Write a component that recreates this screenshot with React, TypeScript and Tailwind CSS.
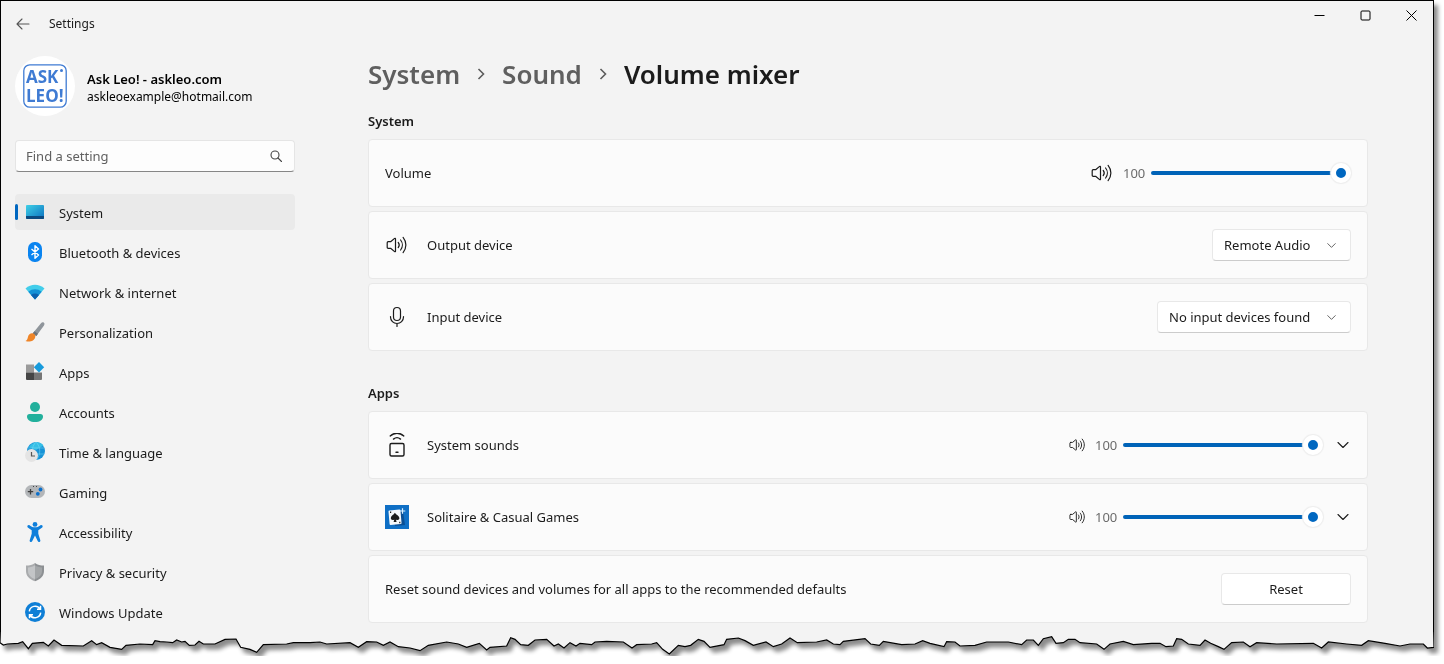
import React, { useState } from "react";

const SpeakerIcon = ({ className }: { className?: string }) => (
  <svg viewBox="0 0 22 18" className={className} fill="none" stroke="currentColor" strokeWidth="1.2" strokeLinecap="round" strokeLinejoin="round">
    <path d="M2.200 5.700h2.400l4-3.300c.4-.3.9-.1.9.4v12.400c0 .5-.5.7-.9.4l-4-3.300H2.200c-.6 0-1-.4-1-1V6.700c0-.6.4-1 1-1z" />
    <path d="M12.200 6.400c1.200 1.500 1.200 3.700 0 5.200" />
    <path d="M14.600 4c2.300 2.900 2.300 7.100 0 10" />
    <path d="M17.100 1.400c3.700 4.500 3.700 10.700 0 15.200" />
  </svg>
);

const MicIcon = () => (
  <svg viewBox="0 0 24 24" className="size-6" fill="none" stroke="currentColor" strokeWidth="1.2" strokeLinecap="round">
    <rect x="8.500" y="2.500" width="7" height="13" rx="3.500" />
    <path d="M5.500 11.500v.5a6.500 6.500 0 0 0 13 0v-.5M12 18.500v3" />
  </svg>
);

const SystemSoundsIcon = () => (
  <svg viewBox="0 0 24 24" className="size-6" fill="none" stroke="currentColor" strokeWidth="1.400" strokeLinecap="round">
    <rect x="5" y="10.500" width="14" height="12.500" rx="1.500" />
    <path d="M11 19.200h2M5.200 2.900c4-3.600 9.600-3.600 13.600 0M8.500 6.100c2-1.700 5-1.700 7 0" />
  </svg>
);

const SolitaireIcon = () => (
  <svg viewBox="0 0 24 24" className="size-6">
    <path fill="#0f6fc5" d="M0 0h24v24H0z" />
    <path fill="#0a4f95" d="m8 7 10-1 2 14-10 1z" />
    <rect x="4" y="5" width="12" height="14.500" rx="1" fill="#f5f8fb" transform="rotate(-5 10 12)" />
    <path fill="#1c1c1c" d="M9.900 7.800c1.200 2 4.300 3.200 4.500 5.300.1 1.800-2.100 2.600-3.500 1.300l.7 2.500H8.600l.7-2.500c-1.400 1.300-3.600.5-3.500-1.300.1-2.100 2.900-3.300 4.100-5.300zM5 6.500h1.200V8H5zM14.200 16.700h1.200v1.500h-1.200z" />
    <path stroke="#d9efff" strokeWidth="1.200" d="M17.500 3.200v5.600M14.700 6h5.600" />
  </svg>
);

const Chevron = ({ className }: { className?: string }) => (
  <svg viewBox="0 0 12 12" className={className} fill="none" stroke="currentColor" strokeWidth="1.100" strokeLinecap="round" strokeLinejoin="round" aria-hidden="true">
    <path d="m1 3.500 5 5 5-5" />
  </svg>
);

const navIcons: Record<string, React.ReactNode> = {
  System: (
    <>
      <defs>
        <linearGradient id="sys" x1="0" y1="0" x2="1" y2="1">
          <stop stopColor="#3fd0e6" />
          <stop offset="1" stopColor="#0a70c0" />
        </linearGradient>
      </defs>
      <rect x="1" y="3" width="18" height="14" rx="1" fill="url(#sys)" />
      <path d="M1 14h18v2a1 1 0 0 1-1 1H2a1 1 0 0 1-1-1z" fill="#0b4a80" />
    </>
  ),
  "Bluetooth & devices": (
    <>
      <rect x="3" y="0" width="14" height="20" rx="6.500" fill="#0a84f0" />
      <path d="m6.500 7 7 6-3.500 3.200V3.800L13.500 7l-7 6" fill="none" stroke="#fff" strokeWidth="1.400" strokeLinejoin="round" />
    </>
  ),
  "Network & internet": (
    <>
      <path d="M.5 6.500c5.500-5 13.500-5 19 0L10 17.500z" fill="#42cdea" />
      <path d="M3.300 9.700c4-3.300 9.400-3.300 13.400 0L10 17.500z" fill="#1391d6" />
      <path d="M6 13c2.500-1.900 5.500-1.900 8 0l-4 4.500z" fill="#0b60ad" />
    </>
  ),
  Personalization: (
    <>
      <path d="M18.700.6c1.100.8 1 1.800.3 2.800L11.300 14l-3.700-2.600L16 1.300c.8-.9 1.700-1.300 2.700-.7z" fill="#8f959b" />
      <path d="m9.500 9.200 3.500 2.500-1.700 2.300-3.700-2.600z" fill="#6e747a" />
      <path d="M7 11.200c2.500.2 3.700 1.800 3.200 4C9.500 18.600 5 20.500.5 19c2-.9 1.900-2.300 2.500-4.300.6-2.100 2-3.500 4-3.500z" fill="#ef8528" />
    </>
  ),
  Apps: (
    <>
      <path d="M1 2.500h8v8H1z" fill="#9a9a9a" />
      <path d="M1 10.500h8v7.500H2a1 1 0 0 1-1-1z" fill="#454545" />
      <path d="M9 10.500h8V17a1 1 0 0 1-1 1H9z" fill="#767676" />
      <path d="m14 0 5.200 5.200-5.200 5.200-5.200-5.200z" fill="#189bdc" />
    </>
  ),
  Accounts: (
    <>
      <circle cx="10" cy="5" r="5" fill="#22b09c" />
      <path d="M4.500 12h11c1.600 0 2.500 1 2.500 2.400C18 17.800 14.800 20 10 20s-8-2.200-8-5.600C2 13 2.900 12 4.500 12z" fill="#22b09c" />
    </>
  ),
  "Time & language": (
    <>
      <circle cx="11" cy="9" r="9" fill="#1793d6" />
      <path d="M4 5c4-6 11-6 14.500-1.500L11 8z" fill="#36bfe6" />
      <path d="M11 0c-5 5-5 13 0 18 5-5 5-13 0-18zM3 6h16M3 12h16" fill="none" stroke="#7ddcf5" strokeWidth=".5" />
      <circle cx="6.500" cy="13.500" r="6.500" fill="#e4e4e4" />
      <path d="M6.500 10v4H10" fill="none" stroke="#555" strokeWidth="1.200" />
    </>
  ),
  Gaming: (
    <>
      <rect x="0" y="3" width="20" height="13" rx="6.500" fill="#b3b6b9" />
      <path d="M5.500 7v5.500M2.800 9.700h5.400" stroke="#3c3c3c" strokeWidth="1.300" />
      <circle cx="15.500" cy="7.500" r="1.900" fill="#0b6fcb" />
      <circle cx="12.800" cy="11.800" r="1.900" fill="#0b6fcb" />
      <path d="M8 4.500h1M11 4.500h1" stroke="#444" />
    </>
  ),
  Accessibility: (
    <>
      <circle cx="10" cy="2.400" r="2.400" fill="#0f7fdb" />
      <path d="M2.600 3.600c.6-.8 1.500-.7 2.200-.2C8 6 12 6 15.200 3.400c.7-.5 1.600-.6 2.200.2.500.8.200 1.600-.5 2.100l-3.600 2.600v3.500l2 6.400c.5 1.600-1.900 2.500-2.600.9L10 13.500l-2.700 5.600c-.7 1.600-3.100.7-2.600-.9l2-6.400V8.300L3.100 5.700c-.7-.5-1-1.300-.5-2.100z" fill="#0f7fdb" />
    </>
  ),
  "Privacy & security": (
    <>
      <path d="M10 1c2.500 2 5.500 2.500 9 2.600V9c0 5-3.500 8.200-9 10.200z" fill="#8d9093" />
      <path d="M10 1C7.500 3 4.500 3.500 1 3.600V9c0 5 3.500 8.200 9 10.200z" fill="#a9abad" />
      <path d="M10 3.200c2 1.500 4.300 2 7 2.200V9c0 3.800-2.500 6.400-7 8.100z" fill="#a3a6a8" />
      <path d="M10 3.200C8 4.700 5.700 5.200 3 5.400V9c0 3.800 2.500 6.400 7 8.100z" fill="#c3c5c7" />
    </>
  ),
  "Windows Update": (
    <>
      <circle cx="10" cy="10" r="10" fill="#0f7fd6" />
      <path d="M4.300 9.300A5.800 5.800 0 0 1 15 7M15.700 10.700A5.800 5.800 0 0 1 5 13M15.500 3.800v3.500H12M4.500 16.200v-3.500H8" fill="none" stroke="#fff" strokeWidth="1.500" />
    </>
  ),
};

const TORN_EDGE =
  "0,68 10,75 22,72 55,70 68,65 85,86 97,70 130,67 145,78 162,60 185,76 250,78 275,62 290,74 305,68 330,82 365,88 378,76 420,72 458,74 465,62 480,65 500,66 518,68 530,60 545,66 555,64 568,76 585,75 597,64 610,72 645,72 675,58 708,57 722,82 750,88 770,97 790,74 860,72 880,68 930,68 960,66 980,72 1050,68 1075,82 1100,65 1130,66 1150,76 1170,66 1195,80 1230,84 1260,92 1285,76 1340,66 1375,72 1400,82 1438,70 " +
  "1460,90 1470,82 1520,78 1532,53 1545,58 1562,74 1585,76 1605,60 1640,58 1662,78 1675,72 1692,84 1710,68 1728,78 1740,70 1775,74 1785,66 1820,64 1870,66 1896,84 1910,74 1955,72 1970,68 1988,88 2008,102 2035,76 2055,80 2072,76 2095,58 2112,64 2130,82 2172,74 2180,58 2215,54 2235,62 2260,76 2298,66 2320,80 2345,72 2370,54 2392,68 2450,66 2480,60 2500,72 2520,74 2530,64 2595,56 2612,72 2638,76 2650,64 2705,74 2745,72 2768,62 2790,70 2832,80 2840,65 2865,66 " +
  "2880,78 2925,76 2960,66 3025,66 3065,74 3080,60 3100,60 3115,76 3130,56 3155,50 3168,70 3190,68 3205,58 3225,58 3240,68 3290,72 3312,88 3330,72 3370,64 3400,74 3455,70 3480,70 3498,80 3520,78 3530,56 3545,58 3565,72 3600,76 3615,60 3632,70 3655,80 3672,88 3695,68 3730,66 3750,80 3770,68 3830,72 3940,70 3965,84 3985,66 4040,72 4085,76 4105,62 4155,70 4200,78 4230,72 4270,72 4282,84 4302,82";

const TornEdge = () => (
  <svg viewBox="0 36 4302 72" preserveAspectRatio="none" className="block h-6 w-full" aria-hidden="true">
    <polygon points={`0,36 ${TORN_EDGE} 4302,36`} fill="#f3f3f3" />
    <polyline points={`1,36 ${TORN_EDGE} 4301,36`} fill="none" stroke="#000" strokeWidth="1.200" vectorEffect="non-scaling-stroke" />
  </svg>
);

const VolumeSlider = ({ label, iconClass }: { label: string; iconClass: string }) => {
  const [value, setValue] = useState(100);

  return (
    <div className="flex items-center">
      <SpeakerIcon className={iconClass} />
      <span className="w-7 text-[#6b6b6b]">{value}</span>
      <input
        type="range"
        min={0}
        max={100}
        value={value}
        onChange={(e) => setValue(Number(e.target.value))}
        aria-label={label}
        style={{ "--fill": `${value}%` } as React.CSSProperties}
        className="h-5 w-[200px] appearance-none bg-transparent [&::-webkit-slider-runnable-track]:h-1 [&::-webkit-slider-runnable-track]:rounded-full [&::-webkit-slider-runnable-track]:bg-[linear-gradient(to_right,#0063b8_var(--fill),#8a8a8a_var(--fill))] [&::-webkit-slider-thumb]:-mt-2 [&::-webkit-slider-thumb]:size-5 [&::-webkit-slider-thumb]:appearance-none [&::-webkit-slider-thumb]:rounded-full [&::-webkit-slider-thumb]:border-5 [&::-webkit-slider-thumb]:border-white [&::-webkit-slider-thumb]:bg-[#0067c0] [&::-webkit-slider-thumb]:shadow-[0_0_1px_1px_#ededed]"
      />
    </div>
  );
};

const Card = ({ icon, title, children }: { icon?: React.ReactNode; title: string; children: React.ReactNode }) => (
  <div className="flex h-[68px] items-center justify-between rounded border border-[#e8e8e8] bg-[#fbfbfb] px-4">
    <div className="flex items-center gap-[18px]">
      {icon}
      <span>{title}</span>
    </div>
    {children}
  </div>
);

const DeviceSelect = ({ label, option }: { label: string; option: string }) => (
  <div className="relative">
    <select aria-label={label} className="h-8 appearance-none rounded border border-[#e8e8e8] border-b-[#cccccc] bg-white pr-[39px] pl-[11px]">
      <option>{option}</option>
    </select>
    <Chevron className="pointer-events-none absolute top-3 right-[15px] size-[9px] text-[#444]" />
  </div>
);

const AppVolume = ({ name }: { name: string }) => (
  <div className="flex items-center gap-3">
    <VolumeSlider label={`${name} volume`} iconClass="mr-[9px] w-[17px]" />
    <button aria-label={`Expand ${name}`} className="flex w-4 justify-center">
      <Chevron className="size-3" />
    </button>
  </div>
);

const Crumb = () => (
  <svg viewBox="0 0 8 12" className="h-3 w-2" fill="none" stroke="#5c5c5c" strokeWidth="1.600" aria-hidden="true">
    <path d="m1.500 1 5 5-5 5" />
  </svg>
);

const App = () => {
  const [search, setSearch] = useState("");

  return (
    <div className="mr-[10px] font-['Noto_Sans','Open_Sans',sans-serif] text-[13px] leading-5 text-[#1b1b1b] drop-shadow-[4px_5px_2px_rgba(0,0,0,0.45)]">
      <div className="border border-b-0 border-black bg-[#f3f3f3] pb-0.5">
        {/* Title bar */}
        <header className="flex h-[46px] items-start justify-between">
          <div className="flex h-[46px] items-center gap-[19px] pl-[15px] text-[12px]">
            <button aria-label="Back">
              <svg viewBox="0 0 14 12" className="h-3 w-[14px]" fill="none" stroke="#555" strokeWidth="1.100" strokeLinecap="round" strokeLinejoin="round">
                <path d="M13 6H1M6 1 1 6l5 5" />
              </svg>
            </button>
            <span>Settings</span>
          </div>
          <div className="flex gap-0.5">
            <button aria-label="Minimize" className="flex h-7 w-11 items-center justify-center">
              <svg viewBox="0 0 11 11" className="size-[11px]" stroke="#000">
                <path d="M.5 5.500h10" />
              </svg>
            </button>
            <button aria-label="Maximize" className="flex h-7 w-11 items-center justify-center">
              <svg viewBox="0 0 11 11" className="size-[11px]" fill="none" stroke="#000">
                <rect x="1" y="1" width="9" height="9" rx="1" />
              </svg>
            </button>
            <button aria-label="Close" className="flex h-7 w-11 items-center justify-center">
              <svg viewBox="0 0 11 11" className="size-[11px]" stroke="#000">
                <path d="m.5.5 10 10M10.500.5l-10 10" />
              </svg>
            </button>
          </div>
        </header>

        <div className="flex">
          <aside className="ml-[14px] w-[280px] shrink-0 pt-[9px]">
            <div className="flex items-center gap-3">
              <div className="flex size-[60px] items-center justify-center rounded-full bg-white">
                <svg viewBox="0 0 44 44" className="size-11" fill="#3f7bd3" aria-label="Ask Leo!">
                  <rect x=".8" y=".8" width="42.400" height="42.400" rx="6" fill="#fff" stroke="#3f7bd3" strokeWidth="1.300" />
                  <text x="3" y="19" fontSize="17" fontWeight="700" fontFamily="Open Sans">ASK</text>
                  <text x="3" y="38" fontSize="17" fontWeight="700" fontFamily="Open Sans">LEO!</text>
                  <circle cx="38.500" cy="6.500" r="1.500" />
                </svg>
              </div>
              <div className="pt-1 leading-[18px] text-black">
                <p className="font-semibold">Ask Leo! - askleo.com</p>
                <p className="text-[12px]">askleoexample@hotmail.com</p>
              </div>
            </div>

            <div className="relative mt-6">
              <input
                type="text"
                value={search}
                onChange={(e) => setSearch(e.target.value)}
                placeholder="Find a setting"
                aria-label="Find a setting"
                className="h-8 w-full rounded border border-[#e5e5e5] border-b-[#868686] bg-[#fdfdfd] pr-9 pl-[10px] placeholder:text-[#606060]"
              />
              <svg viewBox="0 0 12 12" className="absolute top-[10px] right-[13px] size-3" fill="none" stroke="#444" strokeWidth="1.100" strokeLinecap="round">
                <circle cx="5" cy="5" r="4" />
                <path d="m8 8 3.500 3.500" />
              </svg>
            </div>

            <nav className="mt-[22px] flex flex-col gap-1">
              {Object.entries(navIcons).map(([name, icon]) => (
                <a
                  key={name}
                  href="#"
                  aria-current={name === "System" ? "page" : undefined}
                  className="flex h-9 items-center rounded aria-[current=page]:bg-[#eaeaea]"
                >
                  <span className={name === "System" ? "h-4 w-[3px] rounded-full bg-[#0067c0]" : "w-[3px]"} />
                  <svg viewBox="0 0 20 20" className="mr-[14px] ml-[7px] size-5" aria-hidden="true">
                    {icon}
                  </svg>
                  <span className="pt-0.5">{name}</span>
                </a>
              ))}
            </nav>
          </aside>

          <main className="min-w-0 flex-1 pt-[9px] pr-[65px] pl-[73px]">
            <h1 className="flex items-center gap-[17px] text-[26px] leading-9 font-semibold">
              <a href="#" className="text-[#5f5f5f]">System</a>
              <Crumb />
              <a href="#" className="text-[#5f5f5f]">Sound</a>
              <Crumb />
              <span>Volume mixer</span>
            </h1>

            <section className="mt-[19px]">
              <h2 className="mb-2 font-semibold">System</h2>
              <div className="flex flex-col gap-1">
                <Card title="Volume">
                  <VolumeSlider label="System volume" iconClass="mr-[10px] w-[22px]" />
                </Card>
                <Card icon={<span className="flex w-6 justify-center"><SpeakerIcon className="w-[22px]" /></span>} title="Output device">
                  <DeviceSelect label="Output device" option="Remote Audio" />
                </Card>
                <Card icon={<MicIcon />} title="Input device">
                  <DeviceSelect label="Input device" option="No input devices found" />
                </Card>
              </div>
            </section>

            <section className="mt-8">
              <h2 className="mb-2 font-semibold">Apps</h2>
              <div className="flex flex-col gap-1">
                <Card icon={<SystemSoundsIcon />} title="System sounds">
                  <AppVolume name="System sounds" />
                </Card>
                <Card icon={<SolitaireIcon />} title="Solitaire & Casual Games">
                  <AppVolume name="Solitaire & Casual Games" />
                </Card>
                <Card title="Reset sound devices and volumes for all apps to the recommended defaults">
                  <button className="h-8 w-[130px] rounded border border-[#e8e8e8] border-b-[#cccccc] bg-white">Reset</button>
                </Card>
              </div>
            </section>
          </main>
        </div>
      </div>
      <TornEdge />
    </div>
  );
};

export default App;
